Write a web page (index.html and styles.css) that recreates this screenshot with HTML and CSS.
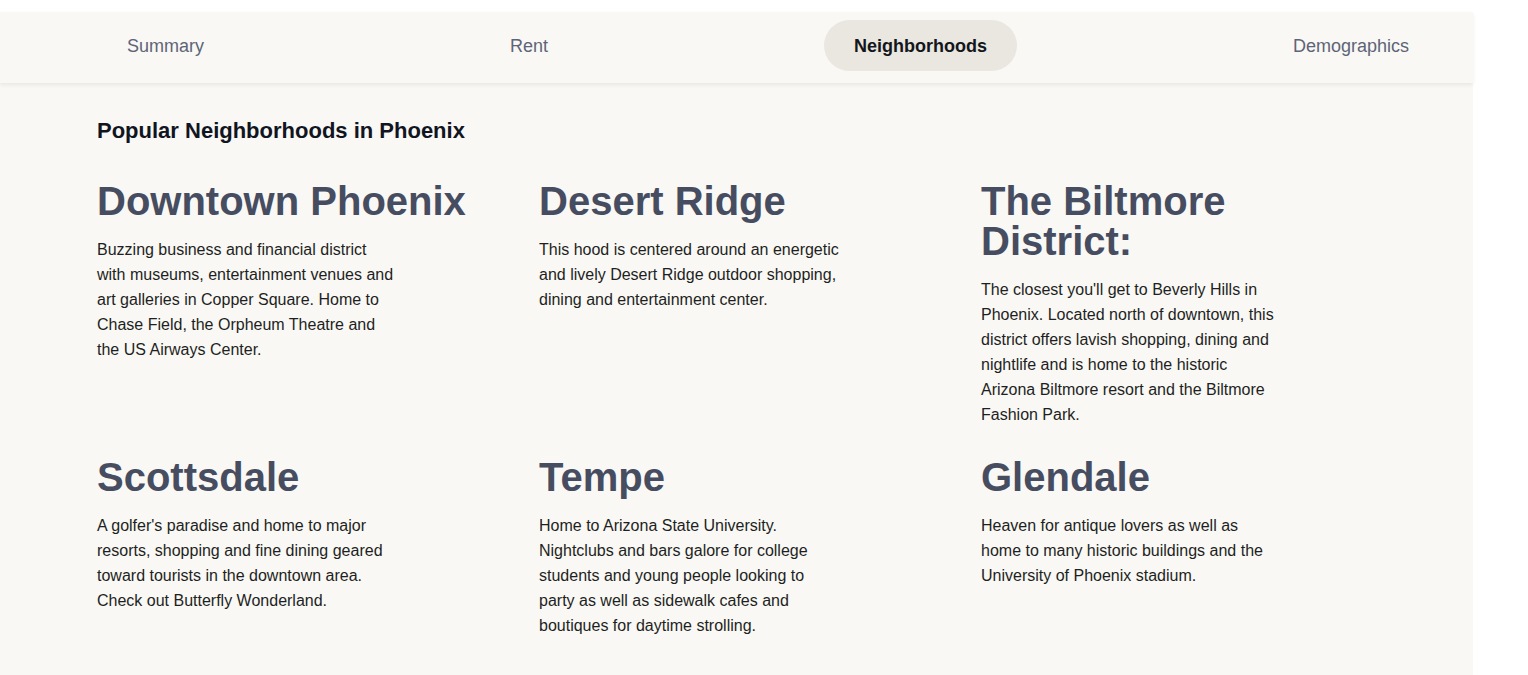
FILE: index.html
```html
<!DOCTYPE html>
<html lang="en">
<head>
<meta charset="utf-8">
<title>Phoenix Neighborhoods</title>
<link rel="stylesheet" href="styles.css">
</head>
<body>
<div class="panel">
  <nav class="tabs">
    <a class="tab">Summary</a>
    <a class="tab">Rent</a>
    <a class="tab active">Neighborhoods</a>
    <a class="tab">Demographics</a>
  </nav>
  <section class="content">
    <h1 class="title">Popular Neighborhoods in Phoenix</h1>
    <div class="grid">
      <div class="hood">
        <h2>Downtown Phoenix</h2>
        <p>Buzzing business and financial district with museums, entertainment venues and art galleries in Copper Square. Home to Chase Field, the Orpheum Theatre and the US Airways Center.</p>
      </div>
      <div class="hood">
        <h2>Desert Ridge</h2>
        <p>This hood is centered around an energetic and lively Desert Ridge outdoor shopping, dining and entertainment center.</p>
      </div>
      <div class="hood">
        <h2>The Biltmore District:</h2>
        <p>The closest you'll get to Beverly Hills in Phoenix. Located north of downtown, this district offers lavish shopping, dining and nightlife and is home to the historic Arizona Biltmore resort and the Biltmore Fashion Park.</p>
      </div>
      <div class="hood">
        <h2>Scottsdale</h2>
        <p>A golfer's paradise and home to major resorts, shopping and fine dining geared toward tourists in the downtown area. Check out Butterfly Wonderland.</p>
      </div>
      <div class="hood">
        <h2>Tempe</h2>
        <p>Home to Arizona State University. Nightclubs and bars galore for college students and young people looking to party as well as sidewalk cafes and boutiques for daytime strolling.</p>
      </div>
      <div class="hood">
        <h2>Glendale</h2>
        <p>Heaven for antique lovers as well as home to many historic buildings and the University of Phoenix stadium.</p>
      </div>
    </div>
  </section>
</div>
</body>
</html>
```

FILE: styles.css
```css
* { box-sizing: border-box; }
html, body {
  margin: 0;
  padding: 0;
  background: #ffffff;
  font-family: "Liberation Sans", Arial, sans-serif;
}
.panel {
  margin-top: 12px;
  width: 1473px;
  min-height: 700px;
  background: #f9f8f5;
}
.tabs {
  display: flex;
  justify-content: space-between;
  align-items: flex-start;
  height: 71px;
  padding: 8px 34px 0 97px;
  background: #f9f8f5;
  box-shadow: 0 2px 4px rgba(0, 0, 0, 0.07);
  position: relative;
}
.tab {
  display: block;
  padding: 2px 30px 0 30px;
  height: 51px;
  line-height: 49px;
  border-radius: 26px;
  font-size: 18px;
  color: #5e6477;
  cursor: pointer;
}
.tab.active {
  background: #e9e7e0;
  color: #14161c;
  font-weight: bold;
}
.content {
  padding: 34px 97px 40px 97px;
}
.title {
  margin: 0;
  font-size: 22px;
  line-height: 28px;
  font-weight: bold;
  color: #111522;
}
.grid {
  display: grid;
  grid-template-columns: 442px 442px 442px;
  row-gap: 30px;
  margin-top: 36px;
}
.hood h2 {
  margin: 0;
  font-size: 40px;
  line-height: 40px;
  font-weight: bold;
  color: #474d60;
  max-width: 400px;
}
.hood p {
  margin: 16px 0 0 0;
  max-width: 300px;
  font-size: 16px;
  line-height: 25px;
  color: #1e1f22;
}
```
